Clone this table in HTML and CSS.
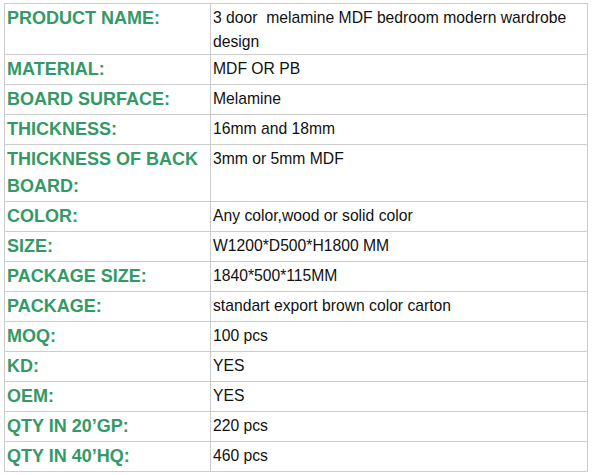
FILE: index.html
```html
<!DOCTYPE html>
<html>
<head>
<meta charset="utf-8">
<link rel="stylesheet" href="styles.css">
</head>
<body>
<table class="spec">
  <colgroup><col class="c-label"><col class="c-value"></colgroup>
  <tr><td class="label">PRODUCT NAME:</td><td class="value">3 door&nbsp; melamine MDF bedroom modern wardrobe design</td></tr>
  <tr><td class="label">MATERIAL:</td><td class="value">MDF OR PB</td></tr>
  <tr><td class="label">BOARD SURFACE:</td><td class="value">Melamine</td></tr>
  <tr><td class="label">THICKNESS:</td><td class="value">16mm and 18mm</td></tr>
  <tr><td class="label">THICKNESS OF BACK BOARD:</td><td class="value">3mm or 5mm MDF</td></tr>
  <tr><td class="label">COLOR:</td><td class="value">Any color,wood or solid color</td></tr>
  <tr><td class="label">SIZE:</td><td class="value">W1200*D500*H1800 MM</td></tr>
  <tr><td class="label">PACKAGE SIZE:</td><td class="value">1840*500*115MM</td></tr>
  <tr><td class="label">PACKAGE:</td><td class="value">standart export brown color carton</td></tr>
  <tr><td class="label">MOQ:</td><td class="value">100 pcs</td></tr>
  <tr><td class="label">KD:</td><td class="value">YES</td></tr>
  <tr><td class="label">OEM:</td><td class="value">YES</td></tr>
  <tr><td class="label">QTY IN 20’GP:</td><td class="value">220 pcs</td></tr>
  <tr><td class="label">QTY IN 40’HQ:</td><td class="value">460 pcs</td></tr>
</table>
</body>
</html>
```

FILE: styles.css
```css
html, body {
  margin: 0;
  background: #ffffff;
}
body {
  padding: 3px 0 0 4px;
  font-family: "Liberation Sans", Arial, sans-serif;
}
.spec {
  border-collapse: collapse;
  table-layout: fixed;
  width: 584px;
}
.c-label { width: 206px; }
.spec td {
  border: 1px solid #cccccc;
  vertical-align: top;
}
.label {
  color: #339966;
  font-weight: bold;
  font-size: 18px;
  line-height: 27px;
  padding: 1px 2px;
}
.value {
  color: #111111;
  font-size: 15.7px;
  line-height: 24px;
  padding: 2px 2px 0 2px;
}
```
